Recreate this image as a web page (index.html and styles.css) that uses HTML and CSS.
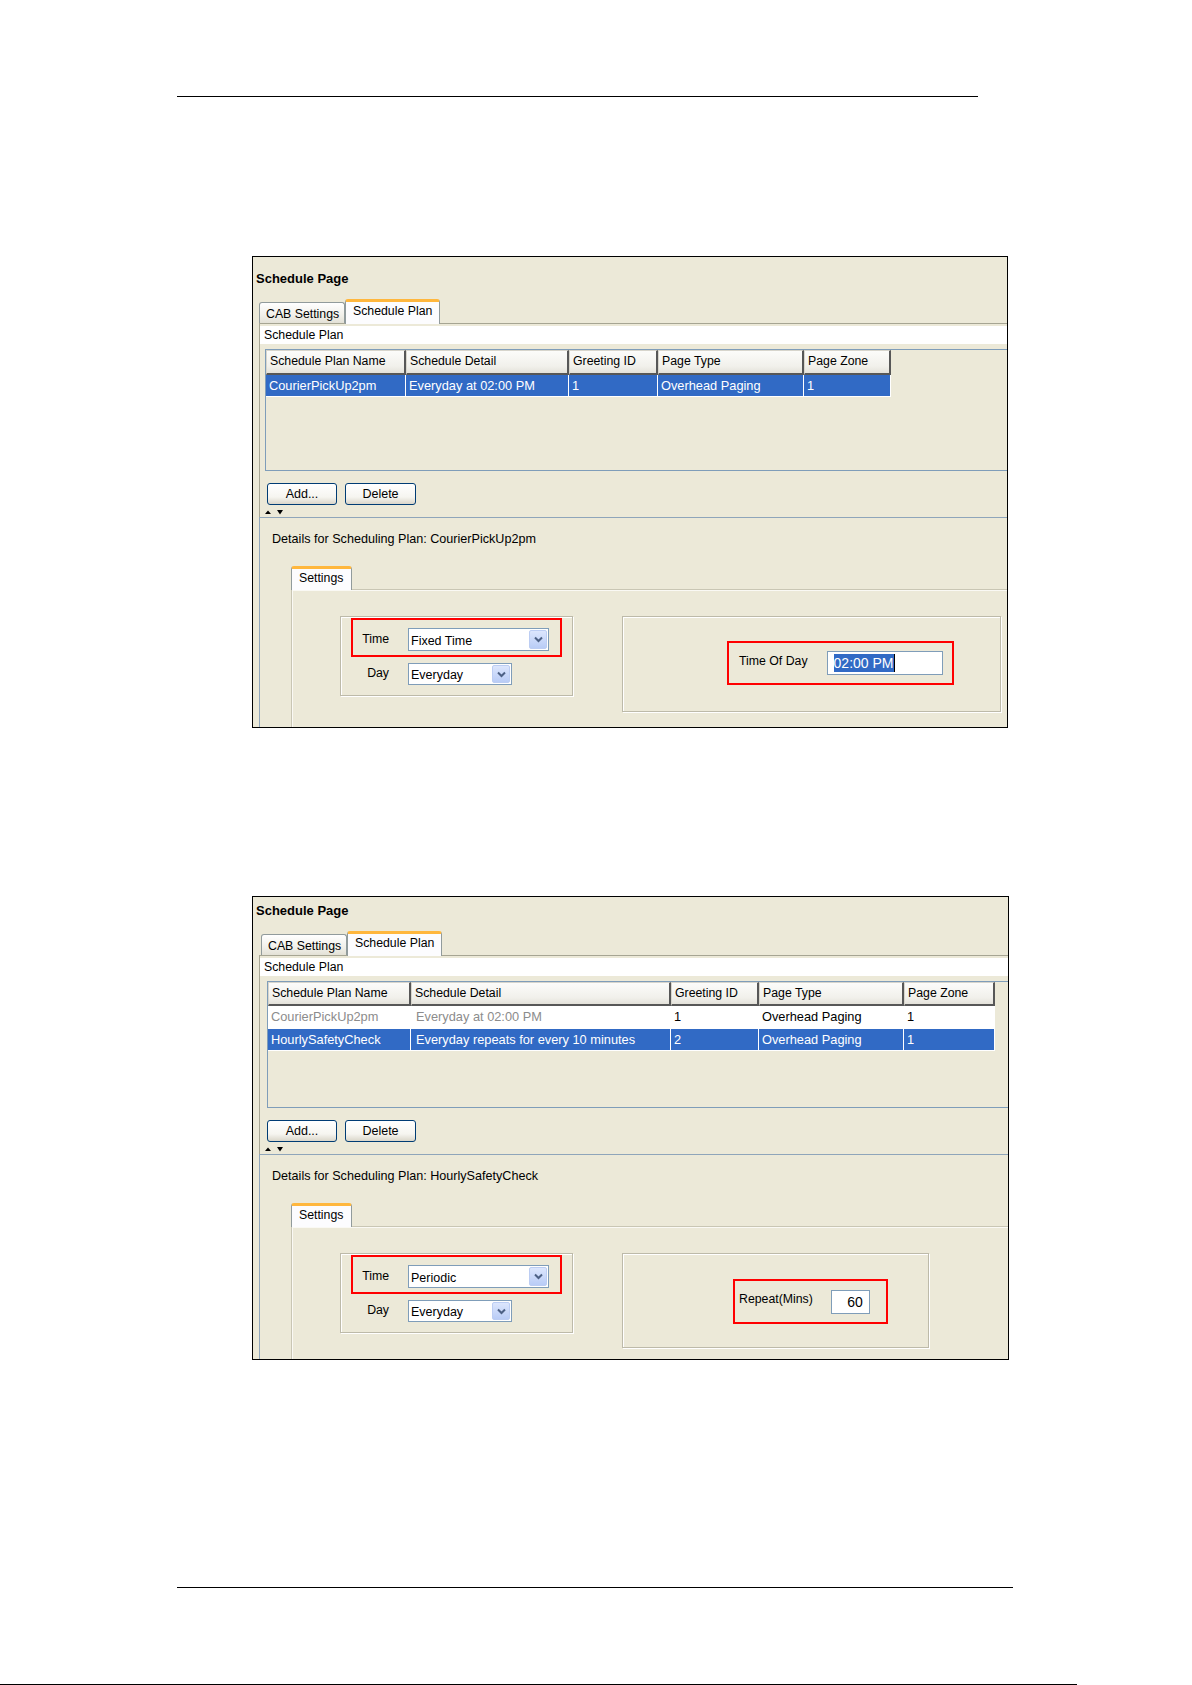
FILE: index.html
```html
<!DOCTYPE html>
<html lang="en">
<head>
<meta charset="utf-8">
<title>Schedule Page</title>
<link rel="stylesheet" href="styles.css">
</head>
<body>
<div class="rule rule-top"></div>

<section class="shot shot-1">
  <div class="shot-title">Schedule Page</div>
  <div class="tabs">
    <div class="tab tab-cab">CAB Settings</div>
    <div class="tab tab-active tab-plan">Schedule Plan</div>
  </div>
  <div class="pane">
    <div class="strip">Schedule Plan</div>
    <div class="tablebox">
      <div class="grid grid-1">
        <div class="th">Schedule Plan Name</div>
        <div class="th">Schedule Detail</div>
        <div class="th">Greeting ID</div>
        <div class="th">Page Type</div>
        <div class="th">Page Zone</div>
        <div class="td sel">CourierPickUp2pm</div>
        <div class="td sel">Everyday at 02:00 PM</div>
        <div class="td sel">1</div>
        <div class="td sel">Overhead Paging</div>
        <div class="td sel">1</div>
      </div>
    </div>
    <div class="btns">
      <button class="xpbtn btn-add">Add...</button>
      <button class="xpbtn btn-del">Delete</button>
    </div>
    <div class="divider">
      <svg width="20" height="7" viewBox="0 0 20 7"><path d="M0 5 L3 1.5 L6 5 Z" fill="#000"/><path d="M12 1 L18 1 L15 5.5 Z" fill="#000"/></svg>
    </div>
  </div>
  <div class="details">
    <div class="dtitle">Details for Scheduling Plan: CourierPickUp2pm</div>
    <div class="tabs sub-tabs">
      <div class="tab tab-active tab-settings">Settings</div>
    </div>
    <div class="subpane">
      <div class="group group-left">
        <div class="redbox red-time">
          <div class="field">
            <span class="lbl">Time</span>
            <div class="combo combo-time"><span class="cval">Fixed Time</span><span class="cbtn"><svg width="9" height="7" viewBox="0 0 9 7"><path d="M1 1.5 L4.5 5 L8 1.5" fill="none" stroke="#4D6185" stroke-width="2"/></svg></span></div>
          </div>
        </div>
        <div class="field field-day">
          <span class="lbl">Day</span>
          <div class="combo combo-day"><span class="cval">Everyday</span><span class="cbtn"><svg width="9" height="7" viewBox="0 0 9 7"><path d="M1 1.5 L4.5 5 L8 1.5" fill="none" stroke="#4D6185" stroke-width="2"/></svg></span></div>
        </div>
      </div>
      <div class="group group-right-1">
        <div class="redbox red-tod">
          <span class="lbl2">Time Of Day</span>
          <div class="input input-tod"><span class="seltext">02:00 PM</span></div>
        </div>
      </div>
    </div>
  </div>
</section>

<section class="shot shot-2">
  <div class="shot-title">Schedule Page</div>
  <div class="tabs">
    <div class="tab tab-cab">CAB Settings</div>
    <div class="tab tab-active tab-plan">Schedule Plan</div>
  </div>
  <div class="pane">
    <div class="strip">Schedule Plan</div>
    <div class="tablebox">
      <div class="grid grid-2">
        <div class="th">Schedule Plan Name</div>
        <div class="th">Schedule Detail</div>
        <div class="th">Greeting ID</div>
        <div class="th">Page Type</div>
        <div class="th">Page Zone</div>
        <div class="td plain dim">CourierPickUp2pm</div>
        <div class="td plain dim">Everyday at 02:00 PM</div>
        <div class="td plain">1</div>
        <div class="td plain">Overhead Paging</div>
        <div class="td plain">1</div>
        <div class="td sel">HourlySafetyCheck</div>
        <div class="td sel">Everyday repeats for every 10 minutes</div>
        <div class="td sel">2</div>
        <div class="td sel">Overhead Paging</div>
        <div class="td sel">1</div>
      </div>
    </div>
    <div class="btns">
      <button class="xpbtn btn-add">Add...</button>
      <button class="xpbtn btn-del">Delete</button>
    </div>
    <div class="divider">
      <svg width="20" height="7" viewBox="0 0 20 7"><path d="M0 5 L3 1.5 L6 5 Z" fill="#000"/><path d="M12 1 L18 1 L15 5.5 Z" fill="#000"/></svg>
    </div>
  </div>
  <div class="details">
    <div class="dtitle">Details for Scheduling Plan: HourlySafetyCheck</div>
    <div class="tabs sub-tabs">
      <div class="tab tab-active tab-settings">Settings</div>
    </div>
    <div class="subpane">
      <div class="group group-left">
        <div class="redbox red-time">
          <div class="field">
            <span class="lbl">Time</span>
            <div class="combo combo-time"><span class="cval">Periodic</span><span class="cbtn"><svg width="9" height="7" viewBox="0 0 9 7"><path d="M1 1.5 L4.5 5 L8 1.5" fill="none" stroke="#4D6185" stroke-width="2"/></svg></span></div>
          </div>
        </div>
        <div class="field field-day">
          <span class="lbl">Day</span>
          <div class="combo combo-day"><span class="cval">Everyday</span><span class="cbtn"><svg width="9" height="7" viewBox="0 0 9 7"><path d="M1 1.5 L4.5 5 L8 1.5" fill="none" stroke="#4D6185" stroke-width="2"/></svg></span></div>
        </div>
      </div>
      <div class="group group-right-2">
        <div class="redbox red-rep">
          <span class="lbl2">Repeat(Mins)</span>
          <div class="input input-rep">60</div>
        </div>
      </div>
    </div>
  </div>
</section>

<div class="rule rule-footer"></div>
<div class="rule rule-edge"></div>
</body>
</html>
```

FILE: styles.css
```css
* { box-sizing: border-box; }
html, body { margin: 0; padding: 0; background: #fff; }
body {
  font-family: "Liberation Sans", Arial, sans-serif;
  font-size: 12.3px;
  color: #000;
  width: 1192px;
}

.rule { height: 1px; background: #000; }
.rule-top { margin: 96px 0 0 177px; width: 801px; }
.rule-footer { margin: 227px 0 0 177px; width: 836px; }
.rule-edge { margin: 96px 0 0 0; width: 1077px; }

.shot {
  border: 1px solid #000;
  background: #ECE9D8;
  overflow: hidden;
  display: flex;
  flex-direction: column;
}
.shot > * { flex-shrink: 0; }
.shot-1 { margin: 159px 0 0 252px; width: 756px; height: 472px; }
.shot-2 { margin: 168px 0 0 252px; width: 757px; height: 464px; }

.shot-title {
  font-weight: bold;
  font-size: 13px;
  line-height: 16px;
  padding-left: 3px;
}
.shot-1 .shot-title { height: 42px; padding-top: 14px; }
.shot-2 .shot-title { height: 34px; padding-top: 6px; }

/* tabs */
.tabs {
  display: flex;
  align-items: flex-end;
  height: 24px;
  padding-left: 6px;
  position: relative;
  z-index: 1;
}
.shot-2 .tabs { padding-left: 8px; }
.tab {
  height: 21px;
  padding: 0 0 0 6px;
  border: 1px solid #919B9C;
  border-bottom: none;
  border-radius: 3px 3px 0 0;
  background: linear-gradient(#FFFFFF, #F1F0EA 60%, #E3E1D6);
  line-height: 22px;
  white-space: nowrap;
}
.tab-cab { width: 86px; }
.tab-active {
  height: 25px;
  margin-bottom: -1px;
  background: #FCFCFE;
  border-top: 3px solid #FFB73D;
  line-height: 19px;
  padding-left: 7px;
}
.tab-plan { width: 95px; }
.tab-settings { width: 61px; height: 24px; line-height: 18px; }

/* upper pane */
.pane {
  margin: 0 -40px 0 6px;
  border-top: 1px solid #A6A593;
  border-left: 1px solid #A6A593;
}
.strip {
  margin-top: 2px;
  height: 18px;
  background: #fff;
  padding-left: 4px;
  line-height: 18px;
}
.tablebox {
  margin: 5px 0 0 5px;
  height: 122px;
  border: 1px solid #7F9DB9;
  border-right: none;
}
.shot-2 .tablebox { height: 127px; margin-left: 7px; }

.grid { display: grid; }
.grid-1 {
  grid-template-columns: 140px 163px 89px 146px 87px;
  grid-template-rows: 25px 22px;
}
.grid-2 {
  grid-template-columns: 143px 260px 88px 145px 91px;
  grid-template-rows: 24px 23px 22px;
}
.th {
  background: linear-gradient(#FCFCFA, #F1F0EB 70%, #E4E2DA);
  border-top: 1px solid #D7D5CC;
  border-left: 1px solid #D7D5CC;
  border-right: 2px solid #575757;
  border-bottom: 2px solid #575757;
  padding-left: 3px;
  line-height: 20px;
  white-space: nowrap;
  overflow: hidden;
}
.grid-2 .th:last-child { margin-right: 2px; }
.td {
  padding-left: 3px;
  line-height: 22px;
  font-size: 12.8px;
  white-space: nowrap;
  overflow: hidden;
}
.td.sel {
  background: #316AC5;
  color: #fff;
  border-right: 1px solid #fff;
  border-bottom: 1px solid #fff;
}
.td.plain { background: #fff; }
.td.dim { color: #8C8C8C; }
.grid-2 .td:nth-child(7), .grid-2 .td:nth-child(12) { padding-left: 5px; }

.btns {
  display: flex;
  gap: 8px;
  margin: 12px 0 0 7px;
}
.xpbtn {
  height: 22px;
  font: 12.5px "Liberation Sans", Arial, sans-serif;
  color: #000;
  border: 1px solid #003C74;
  border-radius: 3px;
  background: linear-gradient(#FFFFFF, #F6F5F0 65%, #DAD6CA);
  padding: 0;
}
.btn-add { width: 70px; }
.btn-del { width: 71px; }

.divider {
  height: 12px;
  padding: 0 0 1px 5px;
  display: flex;
  align-items: flex-end;
}

/* lower details */
.details {
  margin: 0 -40px 0 6px;
  height: 260px;
  border-top: 1px solid #8FA5BA;
  border-left: 1px solid #8FA5BA;
}
.dtitle {
  height: 29px;
  padding: 13px 0 0 12px;
  line-height: 16px;
  font-size: 12.6px;
}
.sub-tabs {
  margin-top: 19px;
  height: 23px;
  padding-left: 31px;
}
.shot-2 .sub-tabs { padding-left: 31px; }
.subpane {
  margin-left: 31px;
  height: 220px;
  border-top: 1px solid #C9C6B4;
  border-left: 1px solid #C9C6B4;
  box-shadow: inset 1px 1px 0 #FAF9F4;
  display: flex;
  align-items: flex-start;
  gap: 49px;
  padding: 26px 0 0 48px;
}
.group {
  flex-shrink: 0;
  border: 1px solid #BDBAA9;
  box-shadow: inset 1px 1px 0 #fff, 1px 1px 0 #fff;
}
.group-left { width: 233px; height: 80px; padding: 1px 0 0 10px; }
.group-right-1 { width: 379px; height: 96px; padding: 24px 0 0 104px; }
.group-right-2 { width: 307px; height: 95px; padding: 25px 0 0 110px; }

.redbox { border: 2px solid #FF0000; }
.red-time { width: 211px; height: 39px; padding-top: 8px; }

.field { display: flex; align-items: center; gap: 19px; }
.field-day { margin: 6px 0 0 2px; }
.lbl { width: 36px; text-align: right; margin-bottom: 2px; }

.combo {
  display: flex;
  align-items: stretch;
  border: 1px solid #7F9DB9;
  background: #fff;
  height: 23px;
}
.combo-time { width: 141px; }
.combo-day { width: 104px; height: 22px; }
.cval {
  flex: 1;
  padding-left: 2px;
  display: flex;
  align-items: center;
  padding-top: 2px;
  font-size: 12.5px;
}
.cbtn {
  width: 18px;
  margin: 1px;
  border: 1px solid #BCCDF3;
  border-radius: 2px;
  background: linear-gradient(#DCE6FD, #B9CCF6);
  display: flex;
  align-items: center;
  justify-content: center;
}

.red-tod {
  width: 227px;
  height: 44px;
  padding-left: 10px;
  display: flex;
  align-items: center;
  gap: 19px;
}
.red-rep {
  width: 155px;
  height: 45px;
  padding-left: 4px;
  display: flex;
  align-items: center;
  gap: 18px;
}
.lbl2 { white-space: nowrap; margin-bottom: 5px; }

.input {
  height: 24px;
  border: 1px solid #7F9DB9;
  background: #fff;
  font-size: 14px;
  display: flex;
  align-items: center;
}
.input-tod { width: 116px; padding-left: 6px; }
.input-rep { width: 39px; justify-content: flex-end; padding-right: 6px; }
.seltext {
  background: #316AC5;
  color: #fff;
  line-height: 18px;
  border-right: 1px solid #000;
}
```
